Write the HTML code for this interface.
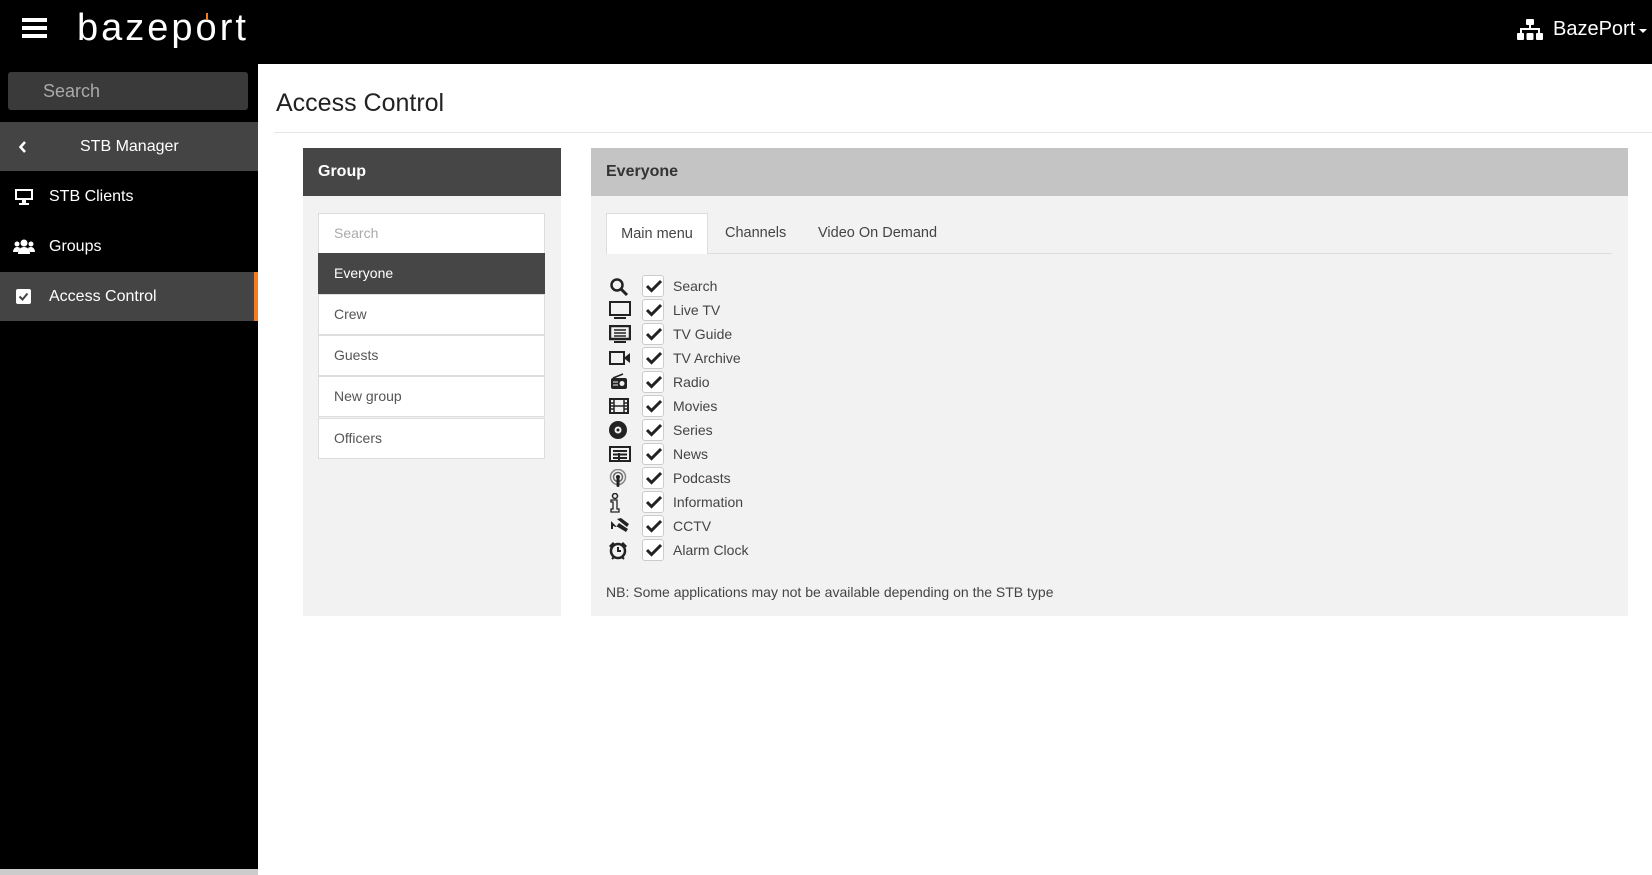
<!DOCTYPE html>
<html><head><meta charset="utf-8"><style>
*{box-sizing:border-box;margin:0;padding:0}
body{width:1652px;height:875px;overflow:hidden;background:#fff;font-family:"Liberation Sans",sans-serif;color:#333;position:relative}
.a{position:absolute}
.top{left:0;top:0;width:1652px;height:64px;background:#000}
.side{left:0;top:64px;width:258px;height:811px;background:#000}
.srch{left:8px;top:72px;width:240px;height:38px;background:#3a3a3a;border-radius:3px;color:#aaa;font-size:18px;line-height:38px;padding-left:35px}
.row{left:0;width:258px;height:49px;color:#fff;font-size:16px;line-height:49px}
.gp{left:303px;top:148px;width:258px;height:468px;background:#f2f2f2}
.gh{left:303px;top:148px;width:258px;height:48px;background:#464646;color:#fff;font-size:16px;font-weight:bold;line-height:48px;padding-left:15px}
.li{left:318px;width:227px;height:41px;background:#fff;border:1px solid #ddd;font-size:14px;line-height:39px;padding-left:15px;color:#555}
.rp{left:591px;top:148px;width:1037px;height:468px;background:#f2f2f2}
.rh{left:591px;top:148px;width:1037px;height:48px;background:#c4c4c4;font-size:16px;font-weight:bold;line-height:48px;padding-left:15px;color:#333}
.tab{top:213px;height:41px;font-size:14.5px;line-height:40px;color:#444}
.it{left:609px;height:24px;width:400px}
.it svg{position:absolute;left:0;top:2px}
.cb{position:absolute;left:33px;top:0;width:22px;height:22px;border:1px solid #ccc;border-radius:3px;background:#fff}
.lb{position:absolute;left:64px;top:0;line-height:23px;font-size:14px;color:#444}
</style></head><body>
<div class="a top"></div>
<div class="a" style="left:22px;top:18px;width:25px;height:4px;background:#fff;box-shadow:0 8px 0 #fff,0 16px 0 #fff"></div>
<div class="a" style="left:77px;top:7px;color:#fff;font-size:38px;letter-spacing:3px;font-weight:300">bazep<span style="position:relative">o<span style="position:absolute;left:10px;top:6px;width:2px;height:7px;background:#f47b20"></span></span>rt</div>
<svg class="a" style="left:1517px;top:19px" width="26" height="21" viewBox="0 0 26 21" fill="#fff"><rect x="9" y="0" width="8" height="6" rx="1"/><rect x="12" y="6" width="2" height="4"/><rect x="3" y="9" width="20" height="2"/><rect x="3" y="9" width="2" height="5"/><rect x="21" y="9" width="2" height="5"/><rect x="0" y="14" width="7" height="7" rx="1"/><rect x="9.5" y="14" width="7" height="7" rx="1"/><rect x="19" y="14" width="7" height="7" rx="1"/></svg>
<div class="a" style="left:1553px;top:18px;color:#fff;font-size:20px">BazePort</div>
<div class="a" style="left:1639px;top:29px;border-left:4px solid transparent;border-right:4px solid transparent;border-top:4px solid #fff"></div>
<div class="a side"></div>
<div class="a srch">Search</div>
<div class="a row" style="top:122px;background:#444"><svg class="a" style="left:19px;top:19px" width="8" height="12"><path d="M6 1L1.5 6 6 11" stroke="#fff" stroke-width="2.5" fill="none"/></svg><span class="a" style="left:80px">STB Manager</span></div>
<div class="a row" style="top:172px"><svg class="a" style="left:14px;top:16px" width="20" height="17" viewBox="0 0 20 17" fill="#fff"><path d="M1 1h18v11H1z M3 3v7h14V3z" fill-rule="evenodd"/><rect x="8" y="12" width="4" height="3"/><rect x="5" y="15" width="10" height="2"/></svg><span class="a" style="left:49px">STB Clients</span></div>
<div class="a row" style="top:222px"><svg class="a" style="left:13px;top:17px" width="22" height="15" viewBox="0 0 22 15" fill="#fff"><circle cx="11" cy="4" r="3.5"/><circle cx="4" cy="5" r="2.5"/><circle cx="18" cy="5" r="2.5"/><path d="M5 15c0-5 3-7 6-7s6 2 6 7z"/><path d="M0 13c0-3 2-5 4-5s3 1 3 1l-2 4z"/><path d="M22 13c0-3-2-5-4-5s-3 1-3 1l2 4z"/></svg><span class="a" style="left:49px">Groups</span></div>
<div class="a row" style="top:272px;background:#444"><svg class="a" style="left:16px;top:17px" width="15" height="15" viewBox="0 0 15 15"><rect width="15" height="15" rx="2" fill="#fff"/><path d="M3.5 7.5l3 3 5-6" stroke="#444" stroke-width="2" fill="none"/></svg><span class="a" style="left:49px">Access Control</span></div>
<div class="a" style="left:254px;top:272px;width:4px;height:49px;background:#f47b20"></div>
<div class="a" style="left:0;top:869px;width:258px;height:6px;background:#ccc"></div>
<div class="a" style="left:276px;top:89px;font-size:25px;color:#222">Access Control</div>
<div class="a" style="left:274px;top:132px;width:1378px;height:1px;background:#e5e5e5"></div>
<div class="a gp"></div>
<div class="a gh">Group</div>
<div class="a li" style="top:213px;color:#aaa">Search</div>
<div class="a li" style="top:253px;background:#464646;border-color:#464646;color:#fff">Everyone</div>
<div class="a li" style="top:294px">Crew</div>
<div class="a li" style="top:335px">Guests</div>
<div class="a li" style="top:376px">New group</div>
<div class="a li" style="top:418px">Officers</div>
<div class="a rp"></div>
<div class="a rh">Everyone</div>
<div class="a" style="left:606px;top:253px;width:1006px;height:1px;background:#ddd"></div>
<div class="a tab" style="left:606px;width:102px;background:#fff;border:1px solid #ddd;border-bottom:none;text-align:center">Main menu</div>
<div class="a tab" style="left:725px">Channels</div>
<div class="a tab" style="left:818px">Video On Demand</div>

<div class="a it" style="top:275px"><svg width="20" height="20" viewBox="0 0 20 20"><circle cx="8" cy="8" r="5.5" stroke="#222" stroke-width="2.5" fill="none"/><path d="M12 12l6 6" stroke="#222" stroke-width="3"/></svg><div class="cb"></div><svg style="left:37px;top:4px" width="16" height="14"><path d="M1 7l4.5 4.5L15 2" stroke="#222" stroke-width="3" fill="none"/></svg><span class="lb">Search</span></div>
<div class="a it" style="top:299px"><svg width="22" height="19" viewBox="0 0 22 19"><rect x="1" y="1" width="20" height="13" stroke="#222" stroke-width="2" fill="none"/><rect x="5" y="16" width="12" height="2" fill="#222"/></svg><div class="cb"></div><svg style="left:37px;top:4px" width="16" height="14"><path d="M1 7l4.5 4.5L15 2" stroke="#222" stroke-width="3" fill="none"/></svg><span class="lb">Live TV</span></div>
<div class="a it" style="top:323px"><svg width="22" height="19" viewBox="0 0 22 19"><rect x="1" y="1" width="20" height="13" stroke="#222" stroke-width="2.5" fill="none"/><path d="M5 5h12M5 8h12M5 11h12" stroke="#222" stroke-width="1.5"/><rect x="5" y="16" width="12" height="2" fill="#222"/></svg><div class="cb"></div><svg style="left:37px;top:4px" width="16" height="14"><path d="M1 7l4.5 4.5L15 2" stroke="#222" stroke-width="3" fill="none"/></svg><span class="lb">TV Guide</span></div>
<div class="a it" style="top:347px"><svg width="22" height="18" viewBox="0 0 22 18"><rect x="1" y="3" width="14" height="12" stroke="#222" stroke-width="2" fill="none"/><path d="M16 8l5-4v10l-5-4z" fill="#222"/></svg><div class="cb"></div><svg style="left:37px;top:4px" width="16" height="14"><path d="M1 7l4.5 4.5L15 2" stroke="#222" stroke-width="3" fill="none"/></svg><span class="lb">TV Archive</span></div>
<div class="a it" style="top:371px"><svg width="20" height="18" viewBox="0 0 20 18"><path d="M4 5L14 1" stroke="#222" stroke-width="1.5"/><rect x="2" y="5" width="16" height="11" rx="2" fill="#222"/><circle cx="13" cy="10.5" r="2.5" fill="#f2f2f2"/><path d="M4 9h5M4 12h5" stroke="#f2f2f2"/></svg><div class="cb"></div><svg style="left:37px;top:4px" width="16" height="14"><path d="M1 7l4.5 4.5L15 2" stroke="#222" stroke-width="3" fill="none"/></svg><span class="lb">Radio</span></div>
<div class="a it" style="top:395px"><svg width="20" height="18" viewBox="0 0 20 18"><rect x="1" y="2" width="18" height="14" stroke="#222" stroke-width="2" fill="none"/><path d="M5 2v14M15 2v14M1 6h4M1 9h4M1 12h4M15 6h4M15 9h4M15 12h4M5 9h10" stroke="#222" stroke-width="1.5"/></svg><div class="cb"></div><svg style="left:37px;top:4px" width="16" height="14"><path d="M1 7l4.5 4.5L15 2" stroke="#222" stroke-width="3" fill="none"/></svg><span class="lb">Movies</span></div>
<div class="a it" style="top:419px"><svg width="20" height="20" viewBox="0 0 20 20"><circle cx="9" cy="9" r="9" fill="#222"/><circle cx="9" cy="9" r="3.5" fill="#f2f2f2"/><circle cx="9" cy="9" r="1.5" fill="#222"/></svg><div class="cb"></div><svg style="left:37px;top:4px" width="16" height="14"><path d="M1 7l4.5 4.5L15 2" stroke="#222" stroke-width="3" fill="none"/></svg><span class="lb">Series</span></div>
<div class="a it" style="top:443px"><svg width="22" height="18" viewBox="0 0 22 18"><rect x="1" y="2" width="20" height="14" stroke="#222" stroke-width="2" fill="none"/><path d="M4 6h14M4 9.5h14M4 13h14M10 8v8" stroke="#222" stroke-width="2"/></svg><div class="cb"></div><svg style="left:37px;top:4px" width="16" height="14"><path d="M1 7l4.5 4.5L15 2" stroke="#222" stroke-width="3" fill="none"/></svg><span class="lb">News</span></div>
<div class="a it" style="top:467px"><svg width="20" height="20" viewBox="0 0 20 20"><circle cx="9" cy="8" r="7.5" stroke="#888" stroke-width="1.5" fill="none"/><circle cx="9" cy="8" r="4.5" stroke="#666" stroke-width="1.5" fill="none"/><circle cx="9" cy="8" r="2" fill="#222"/><rect x="7.5" y="9" width="3" height="9" rx="1.5" fill="#222"/></svg><div class="cb"></div><svg style="left:37px;top:4px" width="16" height="14"><path d="M1 7l4.5 4.5L15 2" stroke="#222" stroke-width="3" fill="none"/></svg><span class="lb">Podcasts</span></div>
<div class="a it" style="top:491px"><svg width="20" height="20" viewBox="0 0 20 20"><circle cx="6" cy="3" r="2.5" stroke="#222" stroke-width="1.5" fill="none"/><path d="M2 7h6v9h2v3H2v-3h2V9H2z" stroke="#222" stroke-width="1.3" fill="none"/></svg><div class="cb"></div><svg style="left:37px;top:4px" width="16" height="14"><path d="M1 7l4.5 4.5L15 2" stroke="#222" stroke-width="3" fill="none"/></svg><span class="lb">Information</span></div>
<div class="a it" style="top:515px"><svg width="20" height="18" viewBox="0 0 20 18"><path d="M2 4v8h2V9l3 1 3-4 9 6-2 3-10-6z M8 2l4-1 8 6-2 3z" fill="#222"/></svg><div class="cb"></div><svg style="left:37px;top:4px" width="16" height="14"><path d="M1 7l4.5 4.5L15 2" stroke="#222" stroke-width="3" fill="none"/></svg><span class="lb">CCTV</span></div>
<div class="a it" style="top:539px"><svg width="20" height="20" viewBox="0 0 20 20"><circle cx="9" cy="10" r="7" stroke="#222" stroke-width="2.5" fill="none"/><path d="M9 6v4h3" stroke="#222" stroke-width="2" fill="none"/><path d="M0 5l4-4 2 2-4 4zM18 5l-4-4-2 2 4 4z" fill="#222"/><path d="M3 18l2-2M15 18l-2-2" stroke="#222" stroke-width="2"/></svg><div class="cb"></div><svg style="left:37px;top:4px" width="16" height="14"><path d="M1 7l4.5 4.5L15 2" stroke="#222" stroke-width="3" fill="none"/></svg><span class="lb">Alarm Clock</span></div>

<div class="a" style="left:606px;top:584px;font-size:14px;color:#444">NB: Some applications may not be available depending on the STB type</div>
</body></html>
